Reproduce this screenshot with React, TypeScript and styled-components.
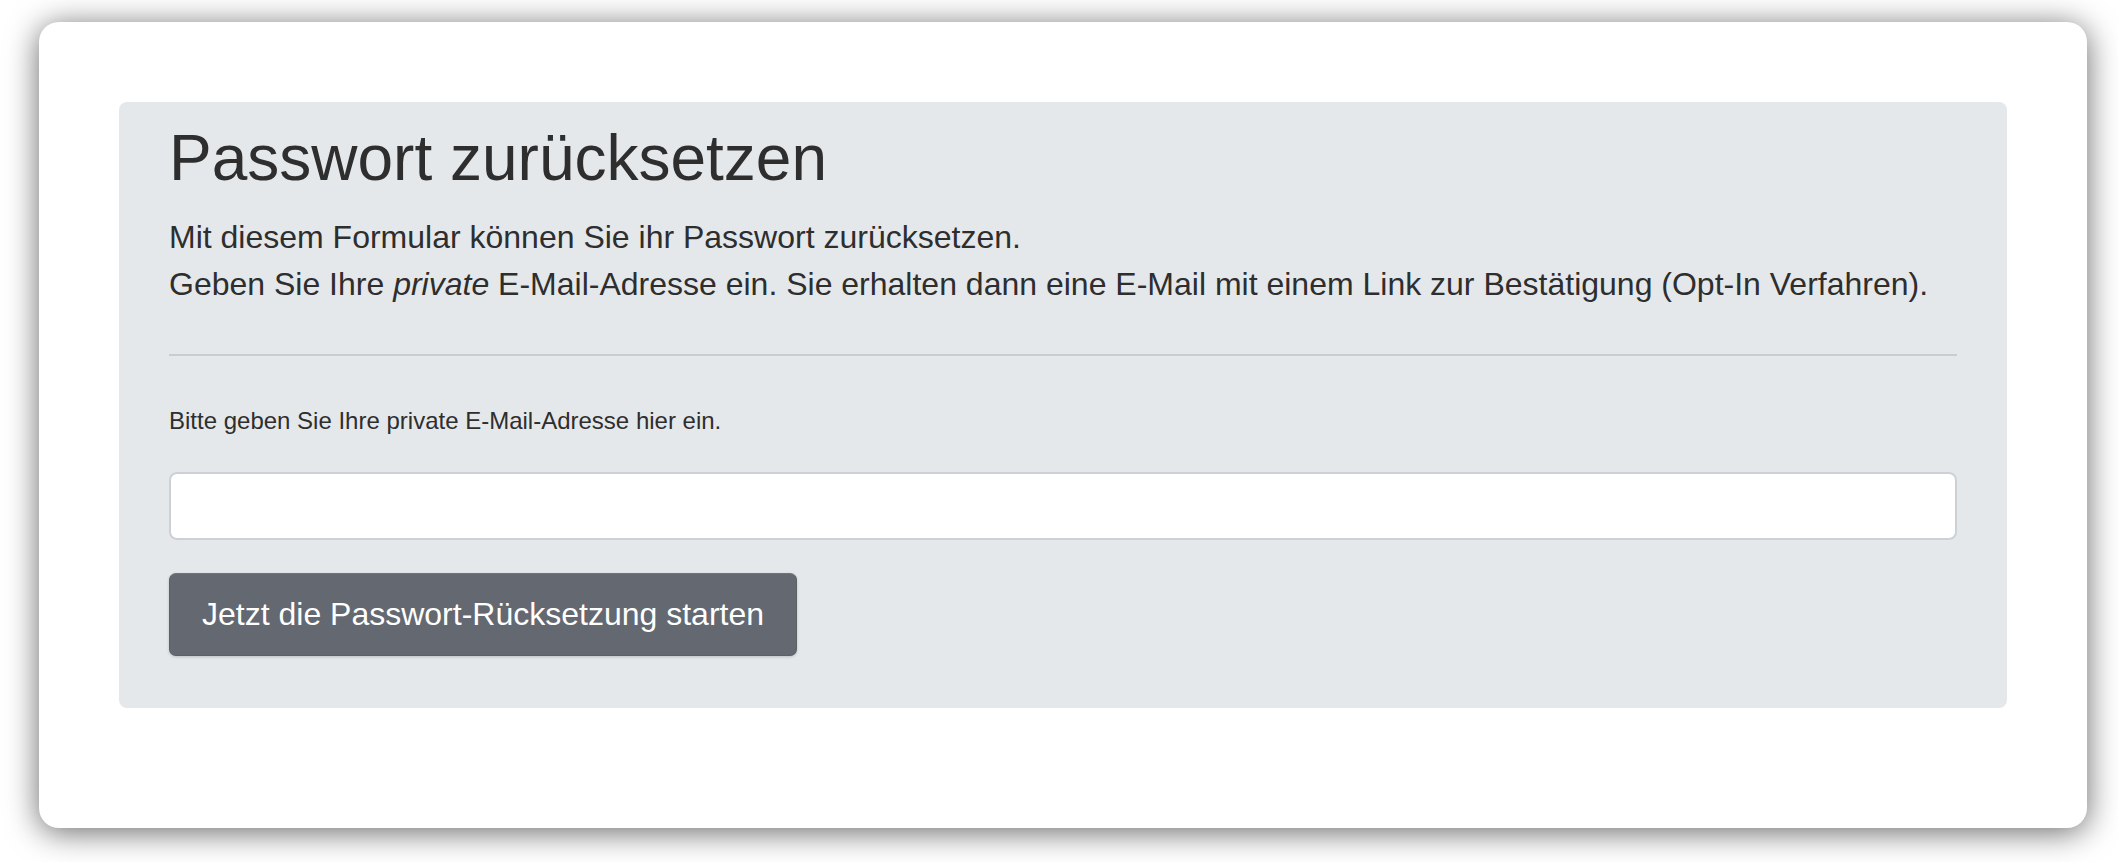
import React, { useState } from "react";
import styled, { createGlobalStyle } from "styled-components";

const GlobalStyle = createGlobalStyle`
  html, body {
    margin: 0;
    padding: 0;
    background: #ffffff;
  }
  body {
    font-family: "Liberation Sans", Arial, sans-serif;
    color: #333333;
  }
  * {
    box-sizing: border-box;
  }
`;

const Page = styled.div`
  padding: 22px 31px 34px 39px;
`;

const Card = styled.div`
  background: #ffffff;
  border-radius: 20px;
  box-shadow: 0 4px 32px rgba(0, 0, 0, 0.6);
  padding: 80px 80px 120px;
`;

const Jumbotron = styled.div`
  background: #e5e8eb;
  border-radius: 8px;
  padding: 18px 50px 52px;
`;

const Title = styled.h1`
  margin: 0 0 17px;
  font-size: 64px;
  font-weight: 300;
  line-height: 1.2;
  color: #2e2e2e;
`;

const Lead = styled.p`
  margin: 0;
  font-size: 32px;
  line-height: 47px;
  color: #2e2e2e;
`;

const Divider = styled.hr`
  margin: 46px 0 47px;
  border: 0;
  border-top: 2px solid #c9cdd2;
`;

const Label = styled.label`
  display: block;
  margin-bottom: 33px;
  font-size: 24px;
  line-height: 36px;
  color: #2e2e2e;
`;

const TextInput = styled.input`
  display: block;
  width: 100%;
  height: 68px;
  margin-bottom: 33px;
  padding: 0 20px;
  font-family: inherit;
  font-size: 28px;
  color: #333;
  background: #ffffff;
  border: 2px solid #cdd1d6;
  border-radius: 8px;
  outline: none;
`;

const SubmitButton = styled.button`
  display: inline-block;
  height: 83px;
  padding: 0 32px;
  font-family: inherit;
  font-size: 32px;
  line-height: 47px;
  color: #ffffff;
  background: #636871;
  border: 1px solid #5b6069;
  border-top-color: #6f747c;
  border-radius: 7px;
  box-shadow: 0 1px 3px rgba(0, 0, 0, 0.18);
  cursor: pointer;
`;

export default function App() {
  const [email, setEmail] = useState("");

  return (
    <>
      <GlobalStyle />
      <Page>
        <Card>
          <Jumbotron>
            <Title>Passwort zurücksetzen</Title>
            <Lead>
              Mit diesem Formular können Sie ihr Passwort zurücksetzen.
              <br />
              Geben Sie Ihre <em>private</em> E-Mail-Adresse ein. Sie erhalten dann eine E-Mail mit einem Link zur
              Bestätigung (Opt-In Verfahren).
            </Lead>
            <Divider />
            <form onSubmit={(e) => e.preventDefault()}>
              <Label htmlFor='email'>Bitte geben Sie Ihre private E-Mail-Adresse hier ein.</Label>
              <TextInput id='email' type='email' value={email} onChange={(e) => setEmail(e.target.value)} />
              <SubmitButton type='submit'>Jetzt die Passwort-Rücksetzung starten</SubmitButton>
            </form>
          </Jumbotron>
        </Card>
      </Page>
    </>
  );
}
